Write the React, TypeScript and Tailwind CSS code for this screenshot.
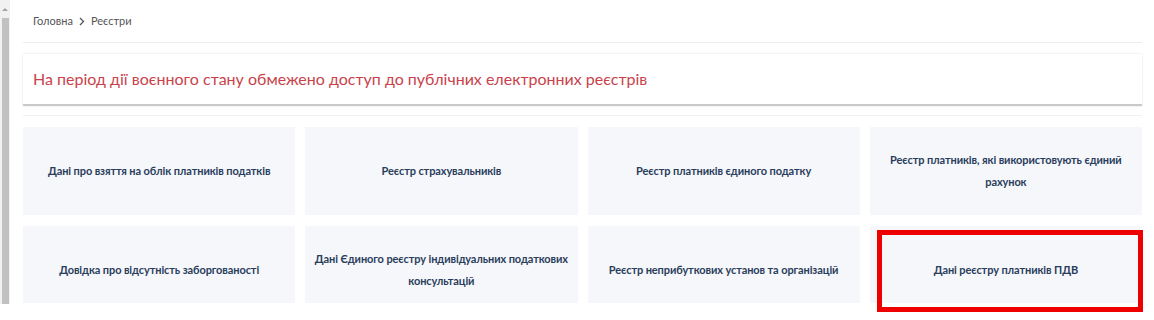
import React from "react";

const cards1 = [
  "Дані про взяття на облік платників податків",
  "Реєстр страхувальників",
  "Реєстр платників єдиного податку",
  "Реєстр платників, які використовують єдиний рахунок",
];
const cards2 = [
  "Довідка про відсутність заборгованості",
  "Дані Єдиного реєстру індивідуальних податкових консультацій",
  "Реєстр неприбуткових установ та організацій",
  "Дані реєстру платників ПДВ",
];

export default function App() {
  return (
    <div className="relative w-[1154px] h-[320px] bg-white overflow-hidden" style={{ fontFamily: "Lato, 'Noto Sans', sans-serif" }}>
      <div className="flex h-[304px]">
        <div className="w-[10px] h-full bg-[#f1f1f1] flex flex-col items-center">
          <div className="h-[18px] flex items-center justify-center">
            <div className="w-0 h-0 border-l-[3px] border-r-[3px] border-b-[3px] border-l-transparent border-r-transparent border-b-[#a3a3a3]" />
          </div>
          <div className="w-[7px] flex-1 bg-[#c1c1c1]" />
        </div>
        <div className="flex-1 pl-[13px] pr-[12px] flex flex-col">
          <div className="h-[43px] border-b border-[#ececec] flex items-center pl-[10px] text-[11px] text-[#555] gap-[6px]">
            <span>Головна</span>
            <svg width="6" height="9" viewBox="0 0 6 9"><path d="M1 1l3.5 3.5L1 8" stroke="#555" strokeWidth="1.3" fill="none" /></svg>
            <span>Реєстри</span>
          </div>
          <div className="mt-[11px] h-[52px] bg-white border-b-2 border-[#c9c9c9] shadow-[0_0_2px_rgba(0,0,0,0.12)] flex items-center pl-[10px] text-[16px] text-[#c9424b]">
            На період дії воєнного стану обмежено доступ до публічних електронних реєстрів
          </div>
          <div className="mt-[9px] border-t border-[#f0f0f0]" />
          <div className="mt-[11px] grid grid-cols-4 gap-x-[10px] gap-y-[11px]">
            {cards1.map((t) => (
              <div key={t} className="h-[88px] bg-[#f5f7fa] flex items-center justify-center text-center px-[8px] text-[11px] tracking-[-0.1px] font-bold leading-[22px] text-[#2a3d5c]">
                {t}
              </div>
            ))}
            {cards2.map((t) => (
              <div key={t} className="h-[77px] bg-[#f5f7fa] flex items-center justify-center text-center px-[8px] pt-[11px] text-[11px] tracking-[-0.1px] font-bold leading-[22px] text-[#2a3d5c]">
                {t}
              </div>
            ))}
          </div>
        </div>
      </div>
      <div className="absolute left-[877px] top-[230px] w-[266px] h-[82px] border-[5px] border-[#ee0000]" />
    </div>
  );
}
